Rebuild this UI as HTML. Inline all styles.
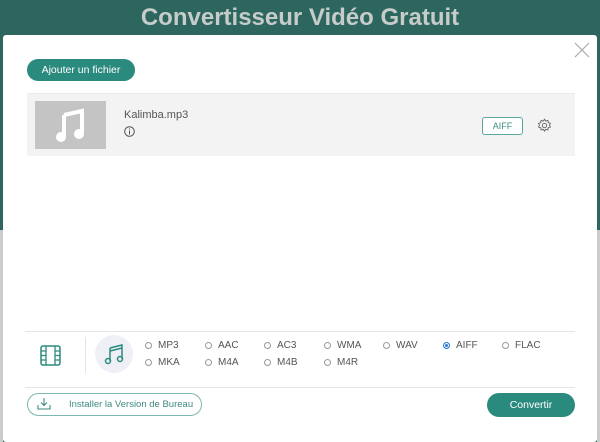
<!DOCTYPE html>
<html><head><style>
*{margin:0;padding:0;box-sizing:border-box}
body{width:600px;height:442px;overflow:hidden;background:#2d665e;font-family:"Liberation Sans",sans-serif;position:relative}
.abs{position:absolute}
.title{left:0;width:600px;top:4px;text-align:center;font-size:24px;font-weight:bold;color:#c5ccc9}
.modal{left:3px;top:35px;width:594px;height:407px;background:#fff;border-radius:3px}
.btn{background:#2b8a7e;color:#fff;border-radius:11px;font-size:10.5px;text-align:center}
.radio{font-size:10px;color:#555}
.radio span{display:inline-block;width:7px;height:7px;border:1px solid #999;border-radius:50%;margin-right:6px;vertical-align:-1px}
</style></head><body>
<div class="abs" style="left:0;top:230px;width:3px;height:212px;background:#ccc"></div>
<div class="abs" style="right:0;top:230px;width:3px;height:212px;background:#ccc"></div>
<div class="abs title">Convertisseur Vidéo Gratuit</div>
<div class="abs modal"></div>
<svg class="abs" style="left:574px;top:42px" width="16" height="16"><path d="M1 1L15 15M15 1L1 15" stroke="#aaa" stroke-width="1.2"/></svg>
<div class="abs btn" style="left:27px;top:59px;width:108px;height:22px;line-height:22px">Ajouter un fichier</div>
<div class="abs" style="left:27px;top:93px;width:548px;height:63px;background:#f3f3f3;border-top:1px solid #eaeaea"></div>
<div class="abs" style="left:35px;top:101px;width:71px;height:48px;background:#c4c4c4"></div>
<svg class="abs" style="left:52px;top:107px" width="36" height="36" viewBox="0 0 36 36"><path d="M12 8L30 4V26" stroke="#fff" stroke-width="4" fill="none"/><path d="M12 8V30" stroke="#fff" stroke-width="4"/><circle cx="9" cy="30" r="5" fill="#fff"/><circle cx="27" cy="27" r="5" fill="#fff"/></svg>
<div class="abs" style="left:124px;top:109px;font-size:11px;color:#555">Kalimba.mp3</div>
<svg class="abs" style="left:124px;top:126px" width="11" height="11"><circle cx="5.5" cy="5.5" r="4.8" stroke="#555" fill="none"/><path d="M5.5 4.5V8.5M5.5 2.5V3.5" stroke="#555"/></svg>
<div class="abs" style="left:482px;top:117px;width:41px;height:18px;border:1px solid #5aa79d;border-radius:3px;font-size:9px;color:#3d8a80;text-align:center;line-height:16px;background:#fff">AIFF</div>
<svg class="abs" style="left:537px;top:118px" width="15" height="15" viewBox="0 0 24 24"><circle cx="12" cy="12" r="3.5" stroke="#666" fill="none" stroke-width="1.5"/><path d="M12 2l2 3 3.5-1 .5 3.5 3.5 1-1.5 3 1.5 3-3.5 1-.5 3.5-3.5-1-2 3-2-3-3.5 1-.5-3.5-3.5-1 1.5-3-1.5-3 3.5-1 .5-3.5 3.5 1z" stroke="#666" fill="none" stroke-width="1.5"/></svg>
<div class="abs" style="left:25px;top:331px;width:550px;height:1px;background:#e5e5e5"></div>
<div class="abs" style="left:25px;top:387px;width:550px;height:1px;background:#e5e5e5"></div>
<div class="abs" style="left:85px;top:337px;width:1px;height:36px;background:#e5e5e5"></div>
<svg class="abs" style="left:40px;top:345px" width="21" height="21"><rect x="1" y="1" width="19" height="19" rx="2" stroke="#2b8a7e" fill="none" stroke-width="1.5"/><path d="M6 1V20M15 1V20M1 6H6M1 10.5H6M1 15H6M15 6H20M15 10.5H20M15 15H20" stroke="#2b8a7e" stroke-width="1.3"/></svg>
<div class="abs" style="left:95px;top:335px;width:38px;height:38px;border-radius:50%;background:#eef0f5"></div>
<svg class="abs" style="left:103px;top:343px" width="22" height="22" viewBox="0 0 22 22"><path d="M7 5L19 2V16M7 5V18M7 8L19 5" stroke="#2b8a7e" stroke-width="1.5" fill="none"/><circle cx="5" cy="18" r="2.5" stroke="#2b8a7e" stroke-width="1.5" fill="none"/><circle cx="17" cy="16" r="2.5" stroke="#2b8a7e" stroke-width="1.5" fill="none"/></svg>
<div class="abs radio" style="left:145px;top:340px"><span></span>MP3</div>
<div class="abs radio" style="left:205px;top:340px"><span></span>AAC</div>
<div class="abs radio" style="left:264px;top:340px"><span></span>AC3</div>
<div class="abs radio" style="left:324px;top:340px"><span></span>WMA</div>
<div class="abs radio" style="left:383px;top:340px"><span></span>WAV</div>
<div class="abs radio" style="left:443px;top:340px"><span style="background:#2a7bd5;border-color:#2a7bd5;box-shadow:inset 0 0 0 1px #fff"></span>AIFF</div>
<div class="abs radio" style="left:502px;top:340px"><span></span>FLAC</div>
<div class="abs radio" style="left:145px;top:357px"><span></span>MKA</div>
<div class="abs radio" style="left:205px;top:357px"><span></span>M4A</div>
<div class="abs radio" style="left:264px;top:357px"><span></span>M4B</div>
<div class="abs radio" style="left:324px;top:357px"><span></span>M4R</div>
<div class="abs" style="left:27px;top:393px;width:175px;height:23px;border:1px solid #7cb8b0;border-radius:12px;font-size:9.5px;color:#3d8a80;line-height:21px;padding-left:41px;white-space:nowrap">Installer la Version de Bureau</div>
<svg class="abs" style="left:37px;top:398px" width="14" height="12"><path d="M7 0V7M4 4.5L7 7.5L10 4.5M1 7V11H13V7" stroke="#3d8a80" fill="none" stroke-width="1.1"/></svg>
<div class="abs btn" style="left:487px;top:393px;width:88px;height:24px;line-height:24px;border-radius:12px">Convertir</div>
</body></html>
